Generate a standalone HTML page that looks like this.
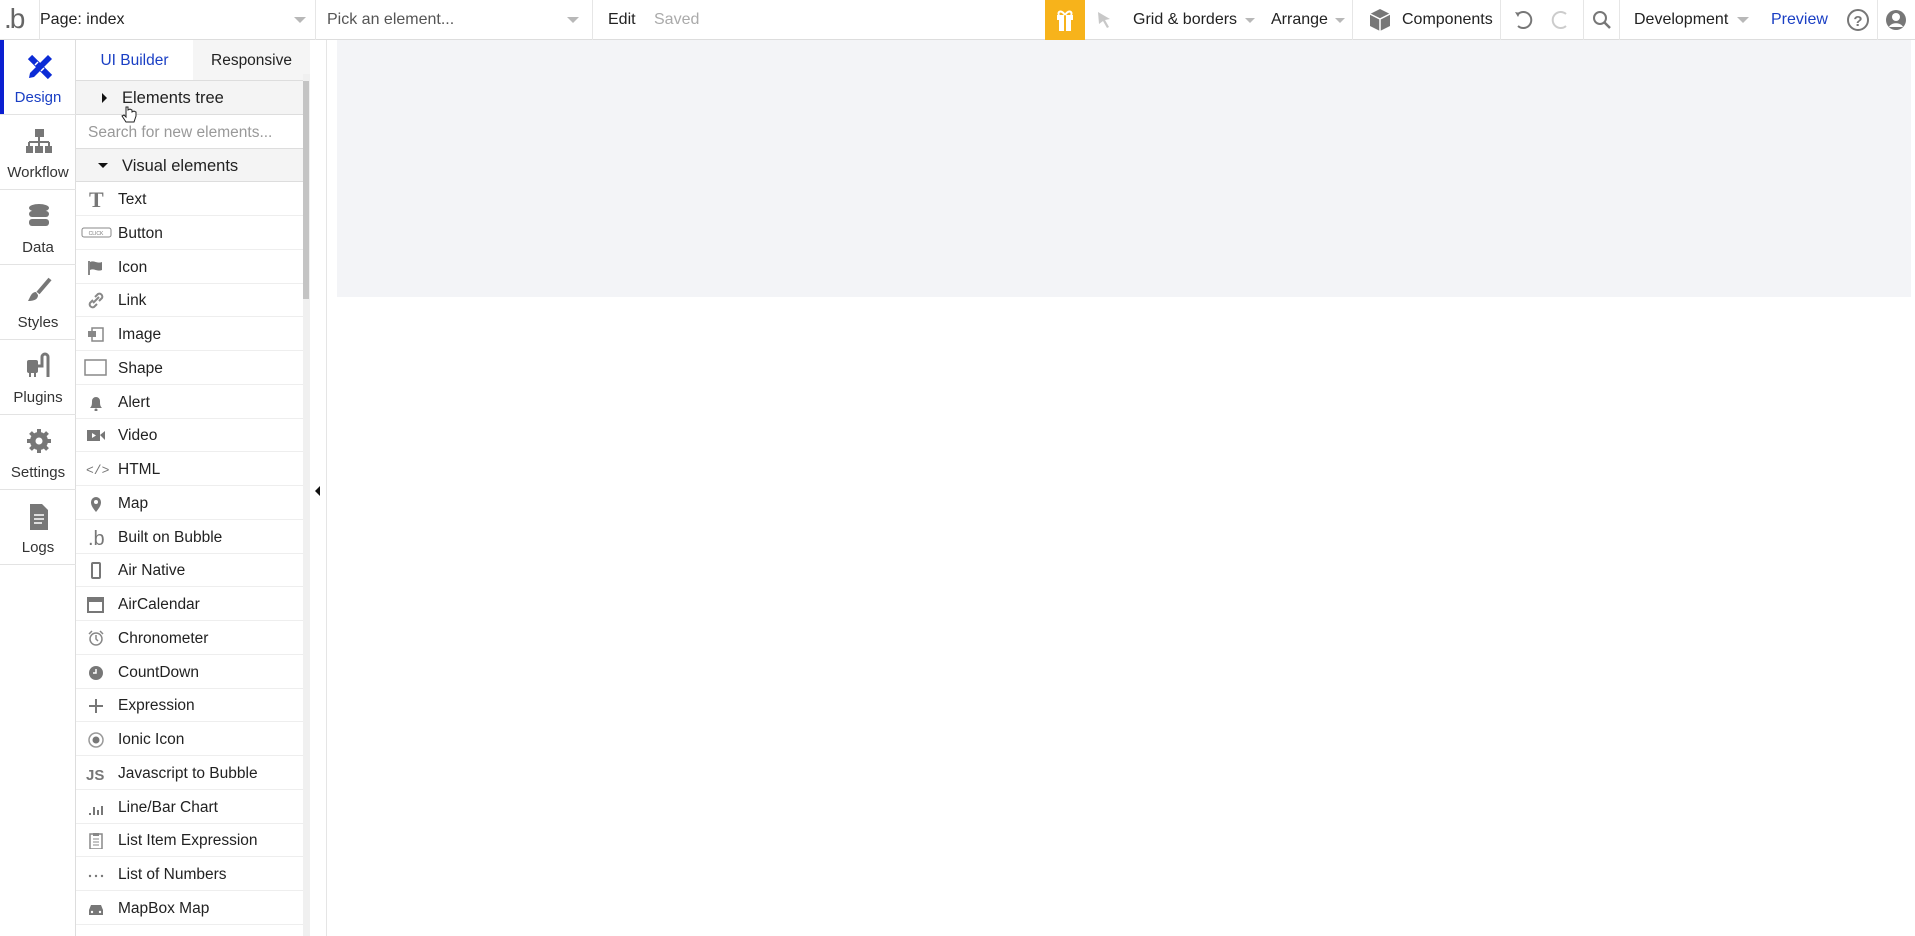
<!DOCTYPE html>
<html><head><meta charset="utf-8"><style>
*{box-sizing:border-box;margin:0;padding:0}
body{width:1915px;height:936px;overflow:hidden;background:#fff;font-family:"Liberation Sans",sans-serif;color:#222;position:relative;font-size:16px}
.a{position:absolute}
.top{left:0;top:0;width:1915px;height:40px;border-bottom:1px solid #ddd;background:#fff}
.sep{position:absolute;top:0;width:1px;height:40px;background:#e6e6e6}
.caret{position:absolute;width:0;height:0;border-left:6px solid transparent;border-right:6px solid transparent;border-top:6px solid #b8b8b8}
.t{position:absolute;top:11px;font-size:16px;white-space:nowrap}
.side{left:0;top:40px;width:76px;height:896px;border-right:1px solid #ddd;background:#fff}
.si{position:absolute;left:0;width:76px;height:75px;border-bottom:1px solid #e3e3e3;text-align:center}
.si span{position:absolute;left:0;right:0;top:49px;font-size:15px;color:#333}
.si svg{position:absolute;left:26px;top:12px}
.panel{left:76px;top:40px;width:234px;height:896px;background:#fff;border-right:1px solid #e0e0e0}
.row{position:absolute;left:0;width:227px;height:34px;border-bottom:1px solid #eee;font-size:15.5px;color:#222}
.row span{position:absolute;left:42px;top:9px}
.row .ic{position:absolute;left:10px;top:8px;width:20px;height:18px}
</style></head><body>
<div class="a top">
 <div class="t" style="left:4px;top:3px;font-size:28px;color:#666;letter-spacing:-2px">.b</div>
 <div class="sep" style="left:39px"></div>
 <div class="t" style="left:40px">Page: index</div>
 <div class="caret" style="left:294px;top:17px"></div>
 <div class="sep" style="left:315px"></div>
 <div class="t" style="left:327px;color:#555">Pick an element...</div>
 <div class="caret" style="left:567px;top:17px"></div>
 <div class="sep" style="left:592px"></div>
 <div class="t" style="left:608px">Edit</div>
 <div class="t" style="left:654px;color:#aaa">Saved</div>
 <div class="a" style="left:1045px;top:0;width:40px;height:40px;background:#f7b31b">
  <svg width="40" height="40"><rect x="12" y="15" width="16" height="5" fill="#fff"/><rect x="14" y="20" width="12" height="11" fill="#fff"/><rect x="19" y="15" width="2" height="16" fill="#f7b31b"/><path d="M20 15c-4-6-8-3-6 0M20 15c4-6 8-3 6 0" stroke="#fff" stroke-width="2" fill="none"/></svg>
 </div>
 <svg class="a" style="left:1093px;top:9px" width="22" height="22"><path d="M5 3l12 7-5 1 4 7-2 1-4-7-4 3z" fill="#c8c8c8"/></svg>
 <div class="t" style="left:1133px">Grid &amp; borders</div>
 <div class="caret" style="left:1245px;top:18px;border-width:5px 5px 0"></div>
 <div class="t" style="left:1271px">Arrange</div>
 <div class="caret" style="left:1335px;top:18px;border-width:5px 5px 0"></div>
 <div class="sep" style="left:1352px"></div>
 <svg class="a" style="left:1367px;top:7px" width="26" height="26"><path d="M13 2l10 5v12l-10 5-10-5V7z" fill="#777"/><path d="M3 7l10 5 10-5M13 12v12" stroke="#fff" stroke-width="1.5" fill="none"/></svg>
 <div class="t" style="left:1402px">Components</div>
 <div class="sep" style="left:1500px"></div>
 <svg class="a" style="left:1510px;top:8px" width="24" height="24"><path d="M8 6a8 8 0 1 1 0 12" stroke="#777" stroke-width="2" fill="none"/><path d="M5 4l5 1-2 4z" fill="#777"/></svg>
 <svg class="a" style="left:1550px;top:8px" width="24" height="24"><path d="M16 6a8 8 0 1 0 0 12" stroke="#ccc" stroke-width="2" fill="none"/></svg>
 <div class="sep" style="left:1583px"></div>
 <svg class="a" style="left:1590px;top:8px" width="24" height="24"><circle cx="10" cy="10" r="6" stroke="#777" stroke-width="2" fill="none"/><path d="M14 14l6 6" stroke="#777" stroke-width="2.5"/></svg>
 <div class="sep" style="left:1619px"></div>
 <div class="t" style="left:1634px">Development</div>
 <div class="caret" style="left:1737px;top:17px"></div>
 <div class="t" style="left:1771px;color:#1a3fc4">Preview</div>
 <svg class="a" style="left:1845px;top:7px" width="26" height="26"><circle cx="13" cy="13" r="10" stroke="#777" stroke-width="2" fill="none"/><text x="13" y="19" text-anchor="middle" font-size="15" font-weight="bold" fill="#777" font-family="Liberation Sans">?</text></svg>
 <div class="sep" style="left:1877px"></div>
 <svg class="a" style="left:1883px;top:7px" width="26" height="26"><circle cx="13" cy="13" r="10" fill="#777"/><circle cx="13" cy="10" r="4" fill="#fff"/><path d="M6 20c2-5 12-5 14 0" fill="#fff"/></svg>
</div>

<div class="a side">
 <div class="a" style="left:0;top:0;width:4px;height:75px;background:#0b1fd1"></div>
 <div class="si" style="top:0"><svg width="28" height="30"><path d="M4 5l20 20" stroke="#0b2bd6" stroke-width="6"/><path d="M22 3l4 4L8 25l-5 1 1-5z" fill="#0b2bd6"/><path d="M9 13l3-3M15 19l3-3" stroke="#fff" stroke-width="1.5"/></svg><span style="color:#1a3fc4">Design</span></div>
 <div class="si" style="top:75px"><svg width="26" height="30"><rect x="9" y="2" width="9" height="8" fill="#777"/><path d="M13 10v5M3 15h20M3 15v4M13 15v4M23 15v4" stroke="#777" stroke-width="2"/><rect x="0" y="19" width="7" height="7" fill="#777"/><rect x="9" y="19" width="8" height="7" fill="#777"/><rect x="19" y="19" width="7" height="7" fill="#777"/></svg><span>Workflow</span></div>
 <div class="si" style="top:150px"><svg width="26" height="30"><ellipse cx="13" cy="6" rx="10" ry="4" fill="#777"/><rect x="3" y="9" width="20" height="6" rx="3" fill="#777"/><rect x="3" y="17" width="20" height="7" rx="3" fill="#777"/></svg><span>Data</span></div>
 <div class="si" style="top:225px"><svg width="26" height="30"><path d="M24 2L12 16" stroke="#777" stroke-width="4"/><path d="M10 15c-5 0-6 6-8 9 5 0 10-1 10-6z" fill="#777"/></svg><span>Styles</span></div>
 <div class="si" style="top:300px"><svg width="26" height="30"><rect x="1" y="8" width="11" height="13" rx="2" fill="#777"/><path d="M4 21v4M9 21v4" stroke="#777" stroke-width="2"/><path d="M12 14h4V5a3 3 0 0 1 6 0v20" stroke="#777" stroke-width="3" fill="none"/></svg><span>Plugins</span></div>
 <div class="si" style="top:375px"><svg width="26" height="30"><circle cx="13" cy="14" r="9" fill="#777"/><path d="M13 2v24M1 14h24M4.5 5.5l17 17M21.5 5.5l-17 17" stroke="#777" stroke-width="4"/><circle cx="13" cy="14" r="3.5" fill="#fff"/></svg><span>Settings</span></div>
 <div class="si" style="top:450px"><svg width="26" height="30"><path d="M4 2h12l6 6v20H4z" fill="#777"/><path d="M8 13h10M8 17h10M8 21h8" stroke="#fff" stroke-width="1.5"/></svg><span>Logs</span></div>
</div>

<div class="a panel">
 <div class="a" style="left:0;top:0;width:117px;height:41px;border-bottom:1px solid #ddd;font-size:15.5px;color:#1a3fc4;text-align:center;padding-top:12px">UI Builder</div>
 <div class="a" style="left:117px;top:0;width:117px;height:41px;background:#f5f5f5;border-bottom:1px solid #ddd;font-size:15.5px;text-align:center;padding-top:12px">Responsive</div>
 <div class="a" style="left:0;top:41px;width:227px;height:34px;background:#f4f4f4;border-bottom:1px solid #ddd"><div class="a" style="left:26px;top:12px;border-top:5px solid transparent;border-bottom:5px solid transparent;border-left:5px solid #111"></div><span class="a" style="left:46px;top:8px;font-size:16.5px">Elements tree</span></div>
 <div class="a" style="left:0;top:75px;width:227px;height:34px;border-bottom:1px solid #ddd"><span class="a" style="left:12px;top:9px;font-size:15.5px;color:#999">Search for new elements...</span></div>
 <div class="a" style="left:0;top:109px;width:227px;height:33px;background:#f4f4f4;border-bottom:1px solid #ddd"><div class="a" style="left:22px;top:14px;border-left:5px solid transparent;border-right:5px solid transparent;border-top:5px solid #111"></div><span class="a" style="left:46px;top:8px;font-size:16.5px">Visual elements</span></div>
 <div class="a" style="left:227px;top:34px;width:7px;height:862px;background:#f0f0f0"></div>
 <div class="a" style="left:227px;top:41px;width:6px;height:218px;background:#c4c4c4"></div>
 <svg class="a" style="left:44px;top:63px" width="20" height="22"><path d="M6 4v10l-2-2-2 1 4 6h8l2-6v-4l-2-1-2 1v-2l-2-1-2 1V4z" fill="#fff" stroke="#222" stroke-width="1"/></svg>

 <div class="row" style="top:142px"><svg class="ic"><text x="3" y="17" font-family="Liberation Serif" font-size="22" font-weight="bold" fill="#777">T</text></svg><span>Text</span></div>
 <div class="row" style="top:176px"><svg class="ic" style="left:5px;width:32px"><rect x="1" y="4" width="29" height="9" rx="2" fill="#fff" stroke="#888"/><text x="15" y="11" text-anchor="middle" font-size="5" fill="#777" font-family="Liberation Sans">CLICK</text></svg><span>Button</span></div>
 <div class="row" style="top:210px"><svg class="ic"><path d="M3 3v14" stroke="#888" stroke-width="2"/><path d="M4 4c4-2 7 2 12 0v8c-5 2-8-2-12 0z" fill="#777"/></svg><span>Icon</span></div>
 <div class="row" style="top:243px"><svg class="ic"><path d="M9 6l3-3a3 3 0 0 1 4 4l-3 3M11 13l-3 3a3 3 0 0 1-4-4l3-3M7 12l6-6" stroke="#888" stroke-width="2" fill="none"/></svg><span>Link</span></div>
 <div class="row" style="top:277px"><svg class="ic"><rect x="6" y="3" width="11" height="13" fill="#fff" stroke="#888" stroke-width="1.5"/><rect x="2" y="6" width="8" height="6" fill="#888"/></svg><span>Image</span></div>
 <div class="row" style="top:311px"><svg class="ic" style="left:8px;width:24px"><rect x="1" y="1" width="21" height="15" fill="none" stroke="#888" stroke-width="1.5"/></svg><span>Shape</span></div>
 <div class="row" style="top:345px"><svg class="ic"><path d="M4 15c2-2 2-4 2-7a4 4 0 0 1 8 0c0 3 0 5 2 7z" fill="#777"/><circle cx="10" cy="17" r="1.5" fill="#777"/></svg><span>Alert</span></div>
 <div class="row" style="top:378px"><svg class="ic"><rect x="1" y="4" width="13" height="11" fill="#777"/><path d="M14 9l5-4v9z" fill="#777"/><path d="M6 7l4 2.5-4 2.5z" fill="#fff"/></svg><span>Video</span></div>
 <div class="row" style="top:412px"><svg class="ic" style="width:24px"><text x="0" y="14" font-size="13" fill="#777" font-family="Liberation Mono">&lt;/&gt;</text></svg><span>HTML</span></div>
 <div class="row" style="top:446px"><svg class="ic"><path d="M10 18c-4-5-5-7-5-10a5 5 0 0 1 10 0c0 3-1 5-5 10z" fill="#777"/><circle cx="10" cy="8" r="2" fill="#fff"/></svg><span>Map</span></div>
 <div class="row" style="top:480px"><svg class="ic"><text x="2" y="17" font-size="20" fill="#777" font-family="Liberation Sans">.b</text></svg><span>Built on Bubble</span></div>
 <div class="row" style="top:513px"><svg class="ic"><rect x="6" y="2" width="8" height="15" rx="1" fill="none" stroke="#777" stroke-width="2"/></svg><span>Air Native</span></div>
 <div class="row" style="top:547px"><svg class="ic"><rect x="2" y="3" width="15" height="14" fill="none" stroke="#777" stroke-width="2"/><rect x="2" y="3" width="15" height="4" fill="#777"/></svg><span>AirCalendar</span></div>
 <div class="row" style="top:581px"><svg class="ic"><circle cx="10" cy="10" r="6" fill="none" stroke="#888" stroke-width="1.5"/><path d="M10 6v4l2 2M3 5l3-3M17 5l-3-3" stroke="#888" stroke-width="1.5" fill="none"/></svg><span>Chronometer</span></div>
 <div class="row" style="top:615px"><svg class="ic"><circle cx="10" cy="10" r="7" fill="#777"/><path d="M10 6v4h-3" stroke="#fff" stroke-width="1.5" fill="none"/></svg><span>CountDown</span></div>
 <div class="row" style="top:648px"><svg class="ic"><path d="M10 3v14M3 10h14" stroke="#777" stroke-width="2"/></svg><span>Expression</span></div>
 <div class="row" style="top:682px"><svg class="ic"><circle cx="10" cy="10" r="7" fill="none" stroke="#999" stroke-width="1.5"/><circle cx="10" cy="10" r="3.5" fill="#777"/></svg><span>Ionic Icon</span></div>
 <div class="row" style="top:716px"><svg class="ic" style="width:24px"><text x="0" y="16" font-size="15" font-weight="bold" fill="#777" font-family="Liberation Sans">JS</text></svg><span>Javascript to Bubble</span></div>
 <div class="row" style="top:750px"><svg class="ic"><path d="M4 15v2M8 9v8M12 12v5M16 8v9" stroke="#777" stroke-width="2"/></svg><span>Line/Bar Chart</span></div>
 <div class="row" style="top:783px"><svg class="ic"><rect x="4" y="3" width="12" height="15" fill="none" stroke="#888" stroke-width="1.5"/><path d="M7 8h6M7 11h6M7 14h6" stroke="#888"/><rect x="7" y="2" width="6" height="3" fill="#888"/></svg><span>List Item Expression</span></div>
 <div class="row" style="top:817px"><svg class="ic"><circle cx="4" cy="11" r="1.2" fill="#777"/><circle cx="10" cy="11" r="1.2" fill="#777"/><circle cx="16" cy="11" r="1.2" fill="#777"/></svg><span>List of Numbers</span></div>
 <div class="row" style="top:851px"><svg class="ic"><path d="M3 11l2-5h10l2 5v5H3z" fill="#777"/><circle cx="6" cy="13" r="1.2" fill="#fff"/><circle cx="14" cy="13" r="1.2" fill="#fff"/></svg><span>MapBox Map</span></div>
</div>

<div class="a" style="left:310px;top:40px;width:17px;height:896px;background:#fff;border-right:1px solid #e5e5e5"></div>
<div class="a" style="left:315px;top:486px;border-top:5px solid transparent;border-bottom:5px solid transparent;border-right:5px solid #111"></div>
<div class="a" style="left:337px;top:40px;width:1574px;height:257px;background:#f3f4f7"></div>
</body></html>
